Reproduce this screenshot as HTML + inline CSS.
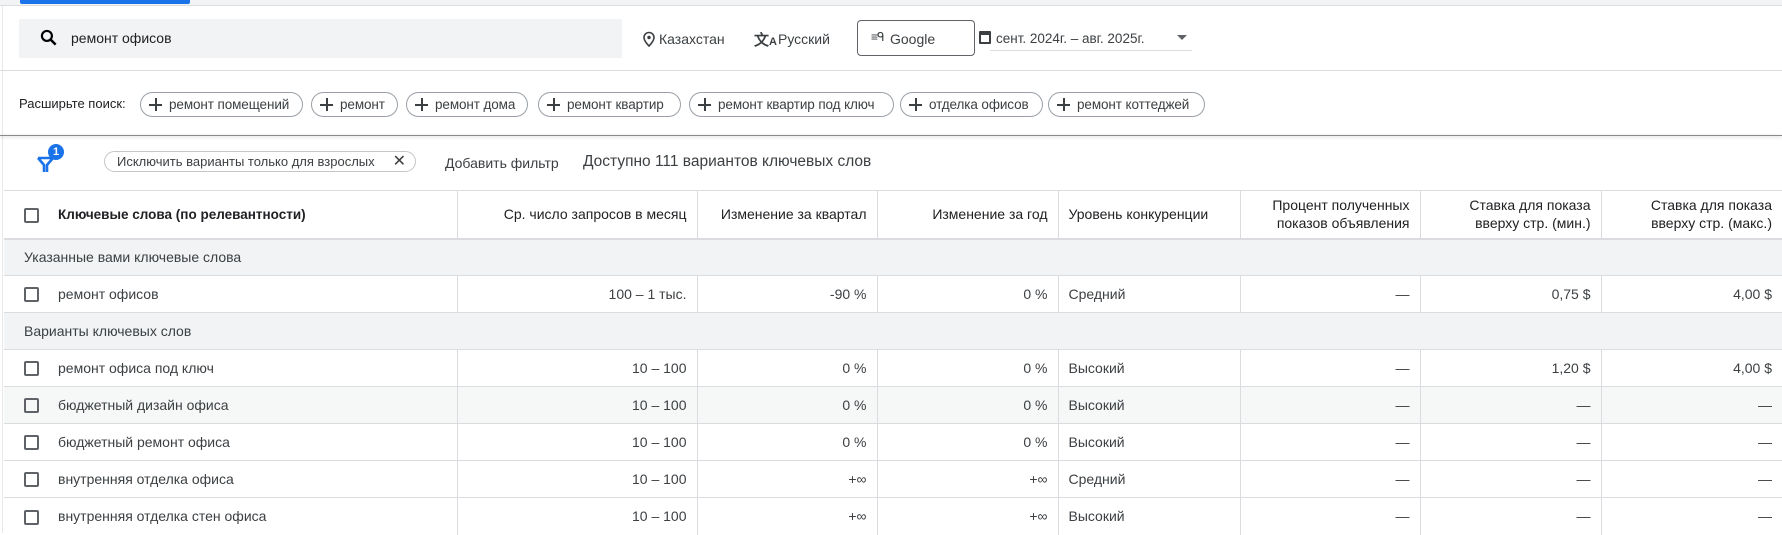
<!DOCTYPE html>
<html><head><meta charset="utf-8"><style>
*{box-sizing:border-box;margin:0;padding:0}
body{width:1782px;height:533px;overflow:hidden;background:#fff;font-family:"Liberation Sans",Arial,sans-serif;color:#3c4043;font-size:14px;position:relative}
.a{position:absolute;white-space:nowrap}
.chip{position:absolute;top:92px;height:25px;border:1px solid #9aa0a6;border-radius:13px;font-size:13.5px;color:#3c4043;line-height:23px;padding-left:28px;letter-spacing:-0.1px}
.chip:before{content:"";position:absolute;left:8px;top:5px;width:13px;height:13px;background:linear-gradient(#3c4043,#3c4043) center/13px 2px no-repeat,linear-gradient(#3c4043,#3c4043) center/2px 13px no-repeat}
table{position:absolute;left:4px;top:190px;border-collapse:collapse;table-layout:fixed;width:1778px}
td{height:37px;border-top:1px solid #dadce0;border-left:1px solid #dadce0;padding:0 10px;white-space:nowrap;font-size:14px;color:#3c4043}
td:first-child{border-left:none}
td.r{text-align:right}
tr.h td{height:48px;border-bottom:2px solid #dadce0;font-size:14px;color:#202124;line-height:18px}
tr.g td{background:#f1f3f4;border-left:none}
tr.hv td{background:#f6f7f7}
.cb{display:inline-block;width:15px;height:15px;border:2px solid #5f6368;border-radius:2px;vertical-align:middle;margin:0 19px 0 8px}
</style></head><body>
<div class="a" style="left:0;top:0;width:1782px;height:6px;background:#f1f3f4;border-bottom:1px solid #dadce0"></div>
<div class="a" style="left:20px;top:0;width:170px;height:4px;background:#1a73e8;border-radius:0 0 2px 2px"></div>
<div class="a" style="left:2px;top:6px;width:1px;height:527px;background:#e8e8e8"></div>
<div class="a" style="left:19px;top:19px;width:603px;height:39px;background:#f1f3f4"></div>
<svg class="a" style="left:39px;top:28px" width="20" height="20" viewBox="0 0 24 24"><circle cx="9.5" cy="9.5" r="6" fill="none" stroke="#000" stroke-width="2.6"/><path d="M14 14l6 6" stroke="#000" stroke-width="3"/></svg>
<div class="a" style="left:71px;top:30px;font-size:14px;color:#202124">ремонт офисов</div>
<svg class="a" style="left:642px;top:31px" width="14" height="16" viewBox="0 0 14 16"><path d="M7 1.5a5 5 0 0 0-5 5c0 3.6 5 8.5 5 8.5s5-4.9 5-8.5a5 5 0 0 0-5-5z" fill="none" stroke="#3c4043" stroke-width="1.6"/><circle cx="7" cy="6.5" r="1.7" fill="#3c4043"/></svg>
<div class="a" style="left:659px;top:31px;font-size:14px">Казахстан</div>
<div class="a" style="left:754px;top:29px;font-size:15px;font-weight:bold;color:#3c4043">文<span style="font-size:11px">A</span></div>
<div class="a" style="left:778px;top:31px;font-size:14px">Русский</div>
<div class="a" style="left:857px;top:20px;width:118px;height:36px;border:1px solid #5f6368;border-radius:4px"></div>
<div class="a" style="left:871px;top:30px;font-size:12px;color:#3c4043;letter-spacing:-1px">≡ᑫ</div>
<div class="a" style="left:890px;top:31px;font-size:14px">Google</div>
<div class="a" style="left:979px;top:31px;width:12px;height:13px;border:2px solid #3c4043;border-top-width:4px;border-radius:1px"></div>
<div class="a" style="left:996px;top:31px;font-size:13.5px">сент. 2024г. – авг. 2025г.</div>
<div class="a" style="left:1177px;top:35px;width:0;height:0;border-left:5px solid transparent;border-right:5px solid transparent;border-top:5px solid #5f6368"></div>
<div class="a" style="left:990px;top:50px;width:202px;height:1px;background:#dadce0"></div>
<div class="a" style="left:0;top:70px;width:1782px;height:1px;background:#dadce0"></div>
<div class="a" style="left:19px;top:96px;font-size:13px;color:#202124">Расширьте поиск:</div>
<div class="chip" style="left:140px;width:163px">ремонт помещений</div>
<div class="chip" style="left:311px;width:87px">ремонт</div>
<div class="chip" style="left:406px;width:122px">ремонт дома</div>
<div class="chip" style="left:538px;width:143px">ремонт квартир</div>
<div class="chip" style="left:689px;width:205px">ремонт квартир под ключ</div>
<div class="chip" style="left:900px;width:143px">отделка офисов</div>
<div class="chip" style="left:1048px;width:157px">ремонт коттеджей</div>
<div class="a" style="left:0;top:135px;width:1782px;height:1px;background:#8a8a8a;box-shadow:0 1px 3px rgba(0,0,0,.25)"></div>
<svg class="a" style="left:36px;top:150px" width="22" height="24" viewBox="0 0 22 24"><path d="M2 8h15l-6 7v7M2 8l6 7v7" fill="none" stroke="#1a73e8" stroke-width="2.6" stroke-linejoin="round"/></svg>
<div class="a" style="left:48px;top:144px;width:16px;height:16px;border-radius:50%;background:#1a73e8;color:#fff;font-size:11px;font-weight:bold;text-align:center;line-height:16px">1</div>
<div class="a" style="left:104px;top:151px;width:312px;height:21px;border:1px solid #c4c7c5;border-radius:11px;font-size:13px;color:#3c4043;line-height:19px;padding-left:12px">Исключить варианты только для взрослых<span style="position:absolute;right:9px;top:0;font-size:16px">✕</span></div>
<div class="a" style="left:445px;top:155px;font-size:14px">Добавить фильтр</div>
<div class="a" style="left:583px;top:153px;font-size:15.5px;color:#3c4043">Доступно 111 вариантов ключевых слов</div>
<table>
<colgroup><col style="width:453px"><col style="width:240px"><col style="width:180px"><col style="width:181px"><col style="width:182px"><col style="width:180px"><col style="width:181px"><col style="width:181px"></colgroup>
<tr class="h"><td style="padding:0"><span class="cb" style="margin-left:20px"></span><b style="font-size:13.5px">Ключевые слова (по релевантности)</b></td><td class="r">Ср. число запросов в месяц</td><td class="r">Изменение за квартал</td><td class="r">Изменение за год</td><td>Уровень конкуренции</td><td class="r">Процент полученных<br>показов объявления</td><td class="r">Ставка для показа<br>вверху стр. (мин.)</td><td class="r">Ставка для показа<br>вверху стр. (макс.)</td></tr>
<tr class="g"><td colspan="8" style="padding-left:20px">Указанные вами ключевые слова</td></tr>
<tr><td style="padding:0"><span class="cb" style="margin-left:20px"></span>ремонт офисов</td><td class="r">100 – 1 тыс.</td><td class="r">-90 %</td><td class="r">0 %</td><td>Средний</td><td class="r">—</td><td class="r">0,75 $</td><td class="r">4,00 $</td></tr>
<tr class="g"><td colspan="8" style="padding-left:20px">Варианты ключевых слов</td></tr>
<tr><td style="padding:0"><span class="cb" style="margin-left:20px"></span>ремонт офиса под ключ</td><td class="r">10 – 100</td><td class="r">0 %</td><td class="r">0 %</td><td>Высокий</td><td class="r">—</td><td class="r">1,20 $</td><td class="r">4,00 $</td></tr>
<tr class="hv"><td style="padding:0"><span class="cb" style="margin-left:20px"></span>бюджетный дизайн офиса</td><td class="r">10 – 100</td><td class="r">0 %</td><td class="r">0 %</td><td>Высокий</td><td class="r">—</td><td class="r">—</td><td class="r">—</td></tr>
<tr><td style="padding:0"><span class="cb" style="margin-left:20px"></span>бюджетный ремонт офиса</td><td class="r">10 – 100</td><td class="r">0 %</td><td class="r">0 %</td><td>Высокий</td><td class="r">—</td><td class="r">—</td><td class="r">—</td></tr>
<tr><td style="padding:0"><span class="cb" style="margin-left:20px"></span>внутренняя отделка офиса</td><td class="r">10 – 100</td><td class="r">+∞</td><td class="r">+∞</td><td>Средний</td><td class="r">—</td><td class="r">—</td><td class="r">—</td></tr>
<tr><td style="padding:0"><span class="cb" style="margin-left:20px"></span>внутренняя отделка стен офиса</td><td class="r">10 – 100</td><td class="r">+∞</td><td class="r">+∞</td><td>Высокий</td><td class="r">—</td><td class="r">—</td><td class="r">—</td></tr>
</table>
</body></html>
